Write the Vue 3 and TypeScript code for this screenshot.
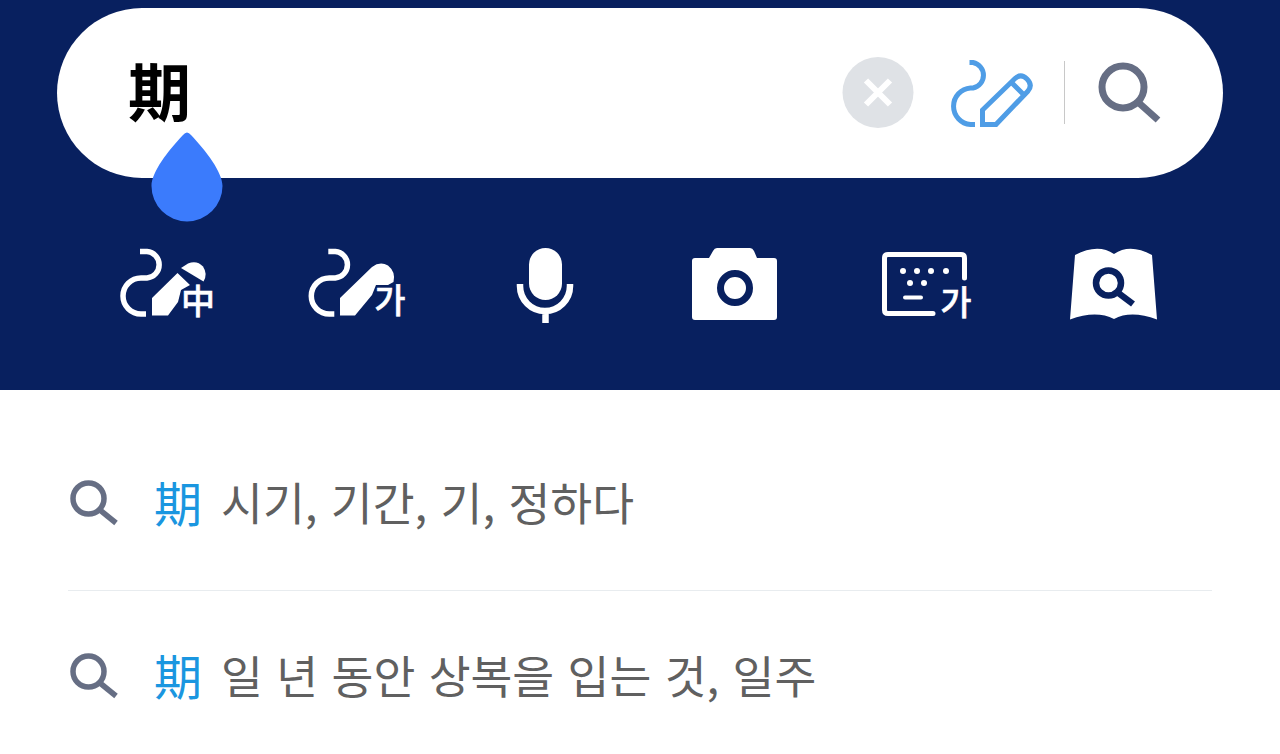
<script setup lang="ts">
interface Suggestion {
  word: string
  meaning: string
}

const suggestions: Suggestion[] = [
  { word: '期', meaning: '시기, 기간, 기, 정하다' },
  { word: '期', meaning: '일 년 동안 상복을 입는 것, 일주' }
]
</script>

<template>
  <div class="page">
    <header class="header">
      <div class="search-box">
        <span class="query">期</span>
        <div class="actions">
          <svg class="clear" width="72" height="72" viewBox="842 56 72 72">
            <circle cx="878" cy="92.500" r="35.500" fill="#dfe2e6" />
            <path d="M866 80.500 L890 104.500 M890 80.500 L866 104.500" stroke="#fff" stroke-width="6" fill="none" />
          </svg>
          <svg class="pen" width="86" height="70" viewBox="950 57 86 70">
            <path d="M969.500 62.500 H973 A13 13 0 0 1 973 88 H970.500 A18.300 18.300 0 0 0 970.500 124.500 H975"
              stroke="#4f9de6" stroke-width="5" fill="none" />
            <path d="M982.500 124.500 V110 L1015 78.500 Q1021 73 1027 79 Q1033 85 1028 91 L996 124.500 Z M1011 82 L1024 95"
              stroke="#4f9de6" stroke-width="5" fill="none" />
          </svg>
          <span class="divider"></span>
          <svg class="magnifier" width="66" height="66" viewBox="1097 59 66 66">
            <circle cx="1123" cy="87" r="21" stroke="#666e84" stroke-width="7" fill="none" />
            <path d="M1139 103 L1158 120" stroke="#666e84" stroke-width="7" fill="none" />
          </svg>
        </div>
        <svg class="drop" width="72" height="90" viewBox="151 132 72 90">
          <path d="M187 132.500 Q185 132.500 183 135 C168 151 151.500 172 151.500 186 A35.500 35.500 0 0 0 222.500 186 C222.500 172 206 151 191 135 Q189 132.500 187 132.500 Z"
            fill="#3b7bfc" />
        </svg>
      </div>

      <div class="tools">
        <svg width="100" height="80" viewBox="117 245 100 80">
          <path d="M140 251.500 H147 A13.300 13.300 0 0 1 147 278 H141 A18 18 0 0 0 141 314 H146"
            stroke="#fff" stroke-width="5.500" fill="none" />
          <path d="M152 315.500 V298 L177.500 273 L190 285 L181 290 L178 302 L168 315.500 Z" fill="#fff" />
          <path d="M181 268 L188 263.500 Q197 260 203 266.500 Q208 274 203.500 281.500 Z" fill="#fff" />
          <text class="glyph" x="198" y="314" text-anchor="middle" font-size="34">中</text>
        </svg>
        <svg width="100" height="80" viewBox="307 245 100 80">
          <path d="M328.300 251.500 H335.300 A13.300 13.300 0 0 1 335.300 278 H329.300 A18 18 0 0 0 329.300 314 H334.300"
            stroke="#fff" stroke-width="5.500" fill="none" />
          <path d="M340 315.500 V298 L372 267 Q380 261 388 265.500 Q396 272 393.500 282 L388 285 L376 285 L372 295 L355 315.500 Z" fill="#fff" />
          <text class="glyph" x="390" y="313" text-anchor="middle" font-size="34">가</text>
        </svg>
        <svg width="100" height="80" viewBox="497 245 100 80">
          <rect x="529" y="248" width="33" height="52" rx="16.500" fill="#fff" />
          <path d="M520 284 V286 A25 25 0 0 0 570 286 V284 M545.500 311 V323" stroke="#fff" stroke-width="6.500" fill="none" />
        </svg>
        <svg width="100" height="80" viewBox="687 245 100 80">
          <path d="M692 261 Q692 258 695 258 H709 L713 251 Q714.500 248 717 248 H750 Q752.500 248 754 251 L757 258 H774 Q777 258 777 261 V317 Q777 320 774 320 H695 Q692 320 692 317 Z" fill="#fff" />
          <circle cx="735" cy="288" r="14.500" fill="#fff" stroke="#08205f" stroke-width="7" />
        </svg>
        <svg width="100" height="80" viewBox="877 245 100 80">
          <path d="M964.500 278 V258 Q964.500 254.500 961 254.500 H888 Q884.500 254.500 884.500 258 V310 Q884.500 313.500 888 313.500 H933"
            stroke="#fff" stroke-width="5" stroke-linecap="round" fill="none" />
          <g fill="#fff">
            <circle cx="903" cy="271" r="3" />
            <circle cx="917" cy="271" r="3" />
            <circle cx="931" cy="271" r="3" />
            <circle cx="946" cy="271" r="3" />
            <circle cx="910" cy="283" r="3" />
            <circle cx="924" cy="283" r="3" />
          </g>
          <path d="M905 297.500 H921" stroke="#fff" stroke-width="4" stroke-linecap="round" />
          <text class="glyph" x="956" y="315" text-anchor="middle" font-size="34">가</text>
        </svg>
        <svg width="100" height="80" viewBox="1067 245 100 80">
          <path d="M1075 255 Q1098 243 1114 254 Q1130 243 1152 255 L1157 319.500 Q1131 310 1114 319 Q1096 310 1070 319.500 Z" fill="#fff" />
          <circle cx="1108.500" cy="283" r="12.500" stroke="#08205f" stroke-width="6.500" fill="none" />
          <path d="M1117 292 L1133 304" stroke="#08205f" stroke-width="6.500" fill="none" />
        </svg>
      </div>
    </header>

    <ul class="list">
      <li v-for="(item, i) in suggestions" :key="i" class="row">
        <svg class="row-icon" width="48" height="46" viewBox="0 0 48 46">
          <circle cx="18.500" cy="18.500" r="15.500" stroke="#666e84" stroke-width="5.500" fill="none" />
          <path d="M30 30 L46 43" stroke="#666e84" stroke-width="5.500" fill="none" />
        </svg>
        <span class="word">{{ item.word }}</span>
        <span class="meaning">{{ item.meaning }}</span>
      </li>
    </ul>
  </div>
</template>

<style scoped>
.page {
  width: 1280px;
  height: 754px;
  overflow: hidden;
  background: #fff;
  font-family: "Noto Sans CJK KR", "Noto Sans", sans-serif;
}

.header {
  height: 390px;
  box-sizing: border-box;
  padding-top: 8px;
  background: #08205f;
}

.search-box {
  position: relative;
  height: 170px;
  margin: 0 57px;
  padding: 0 60px 0 71px;
  display: flex;
  align-items: center;
  justify-content: space-between;
  border-radius: 85px;
  background: #fff;
}

.query {
  font-size: 63px;
  font-weight: 700;
  color: #000;
  line-height: 1;
  margin-top: -10px;
}

.actions {
  display: flex;
  align-items: center;
  margin-top: -2px;
}

.pen {
  margin-left: 36px;
}

.divider {
  width: 1px;
  height: 63px;
  margin: 0 32px 0 28px;
  background: #c8c8c8;
}

.drop {
  position: absolute;
  left: 94px;
  top: 124px;
}

.tools {
  display: grid;
  grid-template-columns: repeat(6, 190px);
  justify-items: center;
  padding: 67px 72px 0;
}

.glyph {
  fill: #fff;
  stroke: #fff;
  stroke-width: 0.5px;
  font-family: "Noto Sans CJK KR", sans-serif;
  font-weight: 500;
}

.list {
  margin: 0;
  padding: 25px 68px 0;
  list-style: none;
}

.row {
  height: 176px;
  box-sizing: border-box;
  display: flex;
  align-items: center;
  border-bottom: 1px solid #e8ecef;
  padding-left: 2px;
  padding-bottom: 4px;
}

.row:last-child {
  height: 166px;
  padding-bottom: 0;
  border-bottom: none;
}

.row-icon {
  margin-top: 4px;
  flex: none;
}

.word {
  margin-left: 36px;
  font-size: 48px;
  color: #1a96e0;
}

.meaning {
  margin-left: 19px;
  font-size: 45.5px;
  word-spacing: 3.2px;
  color: #606060;
}
</style>
